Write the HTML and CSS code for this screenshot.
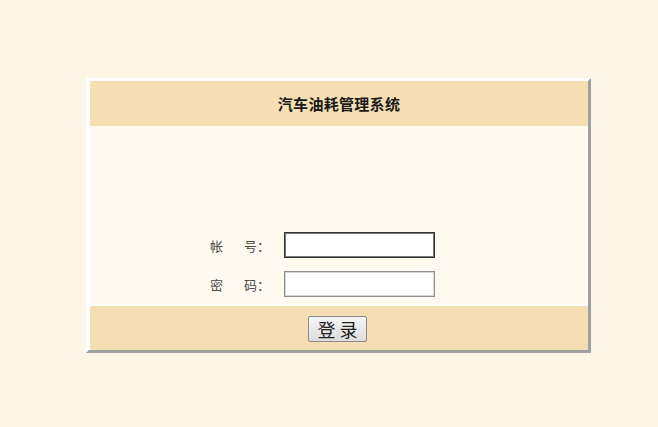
FILE: index.html
```html
<!DOCTYPE html>
<html lang="zh-CN">

<head>
    <meta charset="UTF-8">
    <meta name="viewport" content="width=device-width, initial-scale=1.0">
    <title>汽车油耗管理系统</title>
    <link rel="stylesheet" href="styles.css">
</head>

<body>

    <div class="login">
        <div class="head">汽车油耗管理系统</div>
        <form class="logf" action="javascript:void(0)">
            <div class="field">
                <label class="labl" for="user">帐 号：</label>
                <input id="user" class="focus" type="text" name="user">
            </div>
            <div class="field">
                <label class="labl" for="psw">密 码：</label>
                <input id="psw" type="password" name="psw">
            </div>
        </form>
        <div class="foot">
            <button type="submit">登 录</button>
        </div>
    </div>

</body>

</html>
```

FILE: styles.css
```css
body {
    background-color: #fdf5e6;
    margin: 0;
    font-family: "Noto Sans CJK SC", sans-serif;
}

.login {
    margin: 78px 0 0 86px;
    width: 498px;
    border-style: solid;
    border-width: 3px;
    border-color: #ffffff #a0a0a0 #a0a0a0 #ffffff;
    padding-left: 1px;
    background-color: #ffffff;
}

.head {
    height: 45px;
    line-height: 45px;
    background-color: #f5deb3;
    text-align: center;
    font-size: 15px;
    font-weight: bold;
    letter-spacing: 0.3px;
    color: #1a1a1a;
}

.logf {
    margin: 0;
    padding: 106px 0 7px 120px;
    background-color: #fffaf0;
    display: flex;
    flex-direction: column;
    gap: 13px;
}

.field {
    display: flex;
    align-items: center;
    height: 26px;
}

.labl {
    width: 74px;
    font-size: 13px;
    color: #4a4a4a;
    word-spacing: 18px;
}

input[type=text],
input[type=password] {
    width: 151px;
    height: 26px;
    box-sizing: border-box;
    margin: 0;
    padding: 2px 4px;
    border: 1px solid #8c8c8c;
    box-shadow: inset 0 0 0 1px #d8d8d8;
    background-color: #ffffff;
    border-radius: 0;
}

input.focus {
    border: 1px solid #333333;
    box-shadow: inset 0 0 0 1px #777777;
}

input:focus {
    outline: none;
}

.foot {
    margin-top: 2px;
    height: 44px;
    box-sizing: border-box;
    padding: 10px 3px 0 0;
    background-color: #f5deb3;
    text-align: center;
}

button {
    width: 59px;
    height: 26px;
    padding: 0;
    border: 1px solid #8a8a8a;
    border-radius: 2px;
    background: linear-gradient(#f6f6f6, #dddddd);
    font-family: "Noto Sans CJK SC", sans-serif;
    font-size: 18px;
    line-height: 22px;
    color: #222222;
    cursor: pointer;
}
```
